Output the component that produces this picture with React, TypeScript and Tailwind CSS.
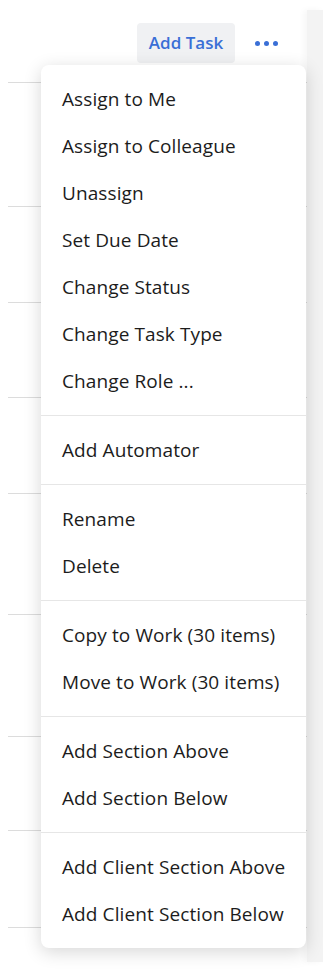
import React from "react";

const groups: string[][] = [
  [
    "Assign to Me",
    "Assign to Colleague",
    "Unassign",
    "Set Due Date",
    "Change Status",
    "Change Task Type",
    "Change Role ...",
  ],
  ["Add Automator"],
  ["Rename", "Delete"],
  ["Copy to Work (30 items)", "Move to Work (30 items)"],
  ["Add Section Above", "Add Section Below"],
  ["Add Client Section Above", "Add Client Section Below"],
];

const rowHeights = [
  "h-[124px]",
  "h-[96px]",
  "h-[95px]",
  "h-[96px]",
  "h-[121px]",
  "h-[122px]",
  "h-[94px]",
  "h-[97px]",
];

export default function App() {
  return (
    <div
      className="relative flex w-[323px] h-[972px] bg-white overflow-hidden"
      style={{ fontFamily: "'Open Sans', Lato, sans-serif" }}
    >
      <div className="w-[307px] flex flex-col pl-[8px]">
        <div className="h-[83px] border-b border-[#dcdcdc] flex items-start justify-end pt-[23px] pr-[29px]">
          <div className="h-[40px] w-[98px] rounded-[4px] bg-[#f0f1f3] flex items-center justify-center text-[17px] font-semibold text-[#3a6fd6] mr-[20px]">
            Add Task
          </div>
          <div className="h-[40px] flex items-center gap-[4px]">
            <span className="block w-[5px] h-[5px] rounded-full bg-[#3a6fd6]" />
            <span className="block w-[5px] h-[5px] rounded-full bg-[#3a6fd6]" />
            <span className="block w-[5px] h-[5px] rounded-full bg-[#3a6fd6]" />
          </div>
        </div>
        {rowHeights.map((h, i) => (
          <div key={i} className={`${h} border-b border-[#dcdcdc]`} />
        ))}
      </div>
      <div className="w-[16px] mt-[10px] mb-[10px] bg-[#f3f3f3] shadow-[-3px_0_6px_rgba(0,0,0,0.04)]" />

      <div className="absolute left-[41px] top-[65px] w-[265px] bg-white rounded-[8px] shadow-[0_4px_18px_rgba(0,0,0,0.16)]">
        {groups.map((g, gi) => (
          <div
            key={gi}
            className={`pt-[11px] pb-[10px] ${gi > 0 ? "border-t border-[#e6e6e6]" : ""}`}
          >
            {g.map((item) => (
              <div
                key={item}
                className="h-[47px] flex items-center pl-[21px] text-[19px] tracking-[0.1px] text-[#1c1c1c] whitespace-nowrap"
              >
                {item}
              </div>
            ))}
          </div>
        ))}
      </div>
    </div>
  );
}
